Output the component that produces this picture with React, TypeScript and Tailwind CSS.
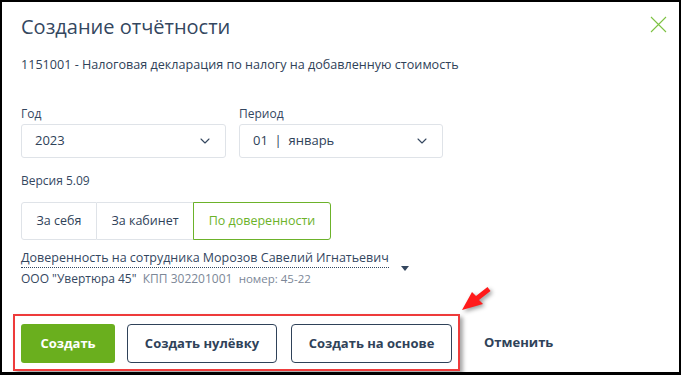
import { ChevronDown } from "lucide-react";

function Select({ label, value, width }: { label: string; value: React.ReactNode; width: string }) {
  return (
    <div className={`flex flex-col ${width}`}>
      <span className="text-[12px] leading-[16px] text-[#34475f]">{label}</span>
      <div className="mt-[2px] h-[34px] rounded-[3px] border border-[#dfe3e8] flex items-center justify-between pl-[13px] pr-[12px] text-[13px] text-[#2f4259]">
        <span>{value}</span>
        <ChevronDown className="h-4 w-4 text-[#34475f]" strokeWidth={1.6} />
      </div>
    </div>
  );
}

export default function App() {
  return (
    <div className="w-[681px] h-[375px] bg-white border-black border-t-2 border-l-2 border-r-2 border-b-[3px] overflow-hidden relative" style={{ fontFamily: '"Open Sans", "Noto Sans", sans-serif' }}>
      {/* Header */}
      <div className="flex items-start justify-between pl-[19px] pr-[12px] pt-[12px]">
        <h1 className="text-[20px] leading-[26px] text-[#34475f]">Создание отчётности</h1>
        <svg width="17" height="17" viewBox="0 0 17 17" className="mt-[2px]">
          <path d="M1 1 L16 16 M16 1 L1 16" stroke="#7dc242" strokeWidth="1.1" fill="none" />
        </svg>
      </div>

      <div className="pl-[19px] pr-[14px]">
        <p className="mt-[16px] text-[12.6px] leading-[17px] text-[#2f4259]">
          1151001 - Налоговая декларация по налогу на добавленную стоимость
        </p>

        {/* Selects */}
        <div className="mt-[33px] flex gap-[13px]">
          <Select label="Год" value="2023" width="w-[205px]" />
          <Select label="Период" value={<>01&nbsp;&nbsp;|&nbsp;&nbsp;январь</>} width="w-[204px]" />
        </div>

        <p className="mt-[15px] text-[12px] leading-[16px] text-[#34475f]">Версия 5.09</p>

        {/* Segmented */}
        <div className="mt-[13px] flex h-[38px] text-[12.5px]">
          <div className="w-[76px] flex items-center justify-center border border-[#dfe3e8] rounded-l-[3px] text-[#2f4259]">За себя</div>
          <div className="w-[97px] flex items-center justify-center border-y border-r border-[#dfe3e8] text-[#2f4259]">За кабинет</div>
          <div className="w-[138px] -ml-px flex items-center justify-center border border-[#6cb22a] rounded-r-[3px] text-[#6cb22a]">По доверенности</div>
        </div>

        {/* Power of attorney */}
        <div className="mt-[9px] flex items-end">
          <div className="flex flex-col">
            <span className="text-[12.5px] leading-[17px] text-[#34475f] border-b border-dotted border-[#34475f] pb-[1px]">
              Доверенность на сотрудника Морозов Савелий Игнатьевич
            </span>
            <span className="text-[12px] leading-[16px] text-[#34475f] mt-[3px]">
              ООО "Увертюра 45"&nbsp;&nbsp;<span className="text-[#7c8797]">КПП 302201001&nbsp;&nbsp;<span className="text-[11.5px]">номер: 45-22</span></span>
            </span>
          </div>
          <svg width="8" height="5" viewBox="0 0 8 5" className="ml-[12px] mb-[16px]">
            <path d="M0 0 H8 L4 5 Z" fill="#34475f" />
          </svg>
        </div>
      </div>

      {/* Footer buttons */}
      <div className="mt-[27px] ml-[11px] flex items-center">
        <div className="border-2 border-[#ee3b3b] pt-[8px] pb-[6px] px-[6px] flex gap-[12px] shadow-[3px_3px_4px_rgba(0,0,0,0.35)]">
          <button className="h-[39px] w-[94px] rounded-[3px] bg-[#6aaf1e] text-white text-[13px] font-bold">Создать</button>
          <button className="h-[39px] w-[150px] rounded-[4px] border border-[#2f4259] text-[#2f4259] text-[13px] font-bold">Создать нулёвку</button>
          <button className="h-[39px] w-[161px] ml-[2px] rounded-[4px] border border-[#2f4259] text-[#2f4259] text-[13px] font-bold">Создать на основе</button>
        </div>
        <button className="ml-[24px] text-[13px] font-bold text-[#2f4259]">Отменить</button>
      </div>

      {/* Red arrow */}
      <svg width="42" height="32" viewBox="0 0 42 32" className="absolute left-[453px] top-[282px]" style={{ filter: "drop-shadow(2px 2px 2px rgba(0,0,0,0.4))" }}>
        <path d="M7 26 L17 8 L21 12 L32.5 3 L35.5 7 L24 16 L28 20 Z" fill="#ff1a1a" />
      </svg>
    </div>
  );
}
